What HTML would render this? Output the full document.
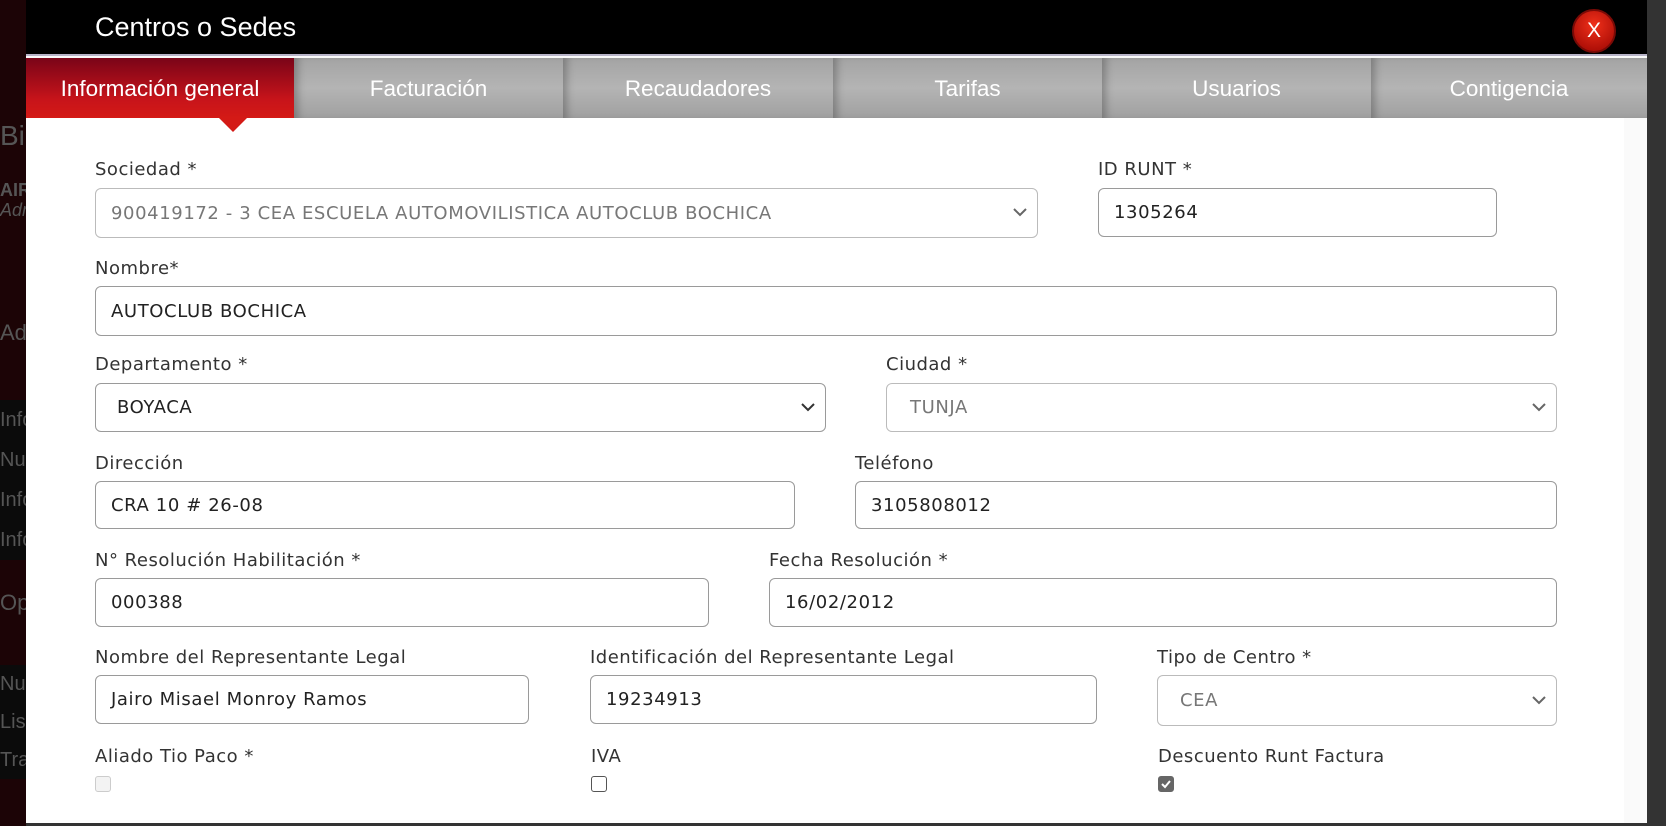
<!DOCTYPE html>
<html><head><meta charset="utf-8"><style>
*{box-sizing:border-box;margin:0;padding:0}
body{width:1666px;height:826px;overflow:hidden;background:#333;position:relative;font-family:"DejaVu Sans","Liberation Sans",sans-serif}
.left{position:absolute;left:0;top:0;width:26px;height:826px;background:#1c0406}
.left div{position:absolute;left:0;width:26px;font-family:"Liberation Sans",sans-serif;color:#555;font-size:20px;overflow:hidden;white-space:nowrap}
.modal{position:absolute;left:26px;top:0;width:1621px;height:823px;background:#fafafa}
.white{position:absolute;left:0;top:58px;width:1598px;height:765px;background:#fff}
.hdr{position:absolute;left:0;top:0;width:1621px;height:56px;background:#000;border-bottom:2px solid #b8b4c8}
.title{position:absolute;left:69px;top:12px;color:#fff;font-family:"Liberation Sans",sans-serif;font-size:27px}
.close{position:absolute;left:1546px;top:9px;width:44px;height:44px;border-radius:50%;background:radial-gradient(circle at 50% 35%,#f0301a,#b01008 75%);border:2px solid #7a0a06;color:#fff;font-family:"Liberation Sans",sans-serif;font-size:21px;text-align:center;line-height:40px}
.tabs{position:absolute;left:0;top:58px;height:60px;width:1621px}
.tab{position:absolute;top:0;height:60px;background:linear-gradient(#a4a4a4,#b4b4b4 50%,#a0a0a0);color:#fff;font-family:"Liberation Sans",sans-serif;font-size:22.5px;text-align:center;line-height:62px;box-shadow:inset 8px 0 8px -4px rgba(0,0,0,.25)}
.tab.act{background:linear-gradient(#7a0418,#c8141a 70%,#d41a16);box-shadow:none}
.arrow{position:absolute;left:193px;top:118px;width:0;height:0;border-left:14px solid transparent;border-right:14px solid transparent;border-top:14px solid #d41a16}
.lbl{position:absolute;font-size:18px;letter-spacing:0.5px;color:#333;white-space:nowrap}
.in{position:absolute;border:1px solid #9a9a9a;border-radius:6px;background:#fff;font-size:18px;letter-spacing:0.6px;color:#222;padding-left:15px;display:flex;align-items:center}
.in.dis{border-color:#bbb;color:#777}
.in svg{position:absolute;right:10px;top:50%;margin-top:-5px}
.cb{position:absolute;width:16px;height:16px;border:1.5px solid #555;border-radius:3px;background:#fff}
</style></head><body>
<div class="left">
<div style="top:120px;height:40px;font-size:28px">Bie</div>
<div style="top:180px;font-weight:bold;font-size:18px">AIR</div>
<div style="top:200px;font-style:italic;font-size:18px">Adm</div>
<div style="top:320px;font-size:22px">Ad</div>
<div style="top:400px;background:#0b0b0b;height:40px;line-height:40px">Info</div>
<div style="top:440px;background:#0b0b0b;height:40px;line-height:40px">Nu</div>
<div style="top:480px;background:#0b0b0b;height:40px;line-height:40px">Info</div>
<div style="top:520px;background:#0b0b0b;height:40px;line-height:40px">Info</div>
<div style="top:590px;font-size:22px">Op</div>
<div style="top:665px;background:#0b0b0b;height:38px;line-height:38px">Nu</div>
<div style="top:703px;background:#0b0b0b;height:38px;line-height:38px">Lis</div>
<div style="top:741px;background:#0b0b0b;height:38px;line-height:38px">Tra</div>
</div>
<div class="modal">
<div class="white"></div>
<div class="hdr"><div class="title">Centros o Sedes</div><div class="close">X</div></div>
<div class="tabs">
<div class="tab act" style="left:0;width:268px">Información general</div>
<div class="tab" style="left:268px;width:269px">Facturación</div>
<div class="tab" style="left:537px;width:270px">Recaudadores</div>
<div class="tab" style="left:807px;width:269px">Tarifas</div>
<div class="tab" style="left:1076px;width:269px">Usuarios</div>
<div class="tab" style="left:1345px;width:276px">Contigencia</div>
</div>
<div class="arrow"></div>
</div>

<div class="lbl" style="left:95px;top:159px">Sociedad *</div>
<div class="in dis" style="left:95px;top:188px;width:943px;height:50px">900419172 - 3 CEA ESCUELA AUTOMOVILISTICA AUTOCLUB BOCHICA<svg width="14" height="9"><path d="M1 1l6 6 6-6" fill="none" stroke="#666" stroke-width="2"/></svg></div>
<div class="lbl" style="left:1098px;top:159px">ID RUNT *</div>
<div class="in" style="left:1098px;top:188px;width:399px;height:49px">1305264</div>

<div class="lbl" style="left:95px;top:258px">Nombre*</div>
<div class="in" style="left:95px;top:286px;width:1462px;height:50px">AUTOCLUB BOCHICA</div>

<div class="lbl" style="left:95px;top:354px">Departamento *</div>
<div class="in" style="left:95px;top:383px;width:731px;height:49px;padding-left:21px">BOYACA<svg width="14" height="9"><path d="M1 1l6 6 6-6" fill="none" stroke="#333" stroke-width="2"/></svg></div>
<div class="lbl" style="left:886px;top:354px">Ciudad *</div>
<div class="in dis" style="left:886px;top:383px;width:671px;height:49px;padding-left:23px">TUNJA<svg width="14" height="9"><path d="M1 1l6 6 6-6" fill="none" stroke="#666" stroke-width="2"/></svg></div>

<div class="lbl" style="left:95px;top:453px">Dirección</div>
<div class="in" style="left:95px;top:481px;width:700px;height:48px">CRA 10 # 26-08</div>
<div class="lbl" style="left:855px;top:453px">Teléfono</div>
<div class="in" style="left:855px;top:481px;width:702px;height:48px">3105808012</div>

<div class="lbl" style="left:95px;top:550px">N° Resolución Habilitación *</div>
<div class="in" style="left:95px;top:578px;width:614px;height:49px">000388</div>
<div class="lbl" style="left:769px;top:550px">Fecha Resolución *</div>
<div class="in" style="left:769px;top:578px;width:788px;height:49px">16/02/2012</div>

<div class="lbl" style="left:95px;top:647px">Nombre del Representante Legal</div>
<div class="in" style="left:95px;top:675px;width:434px;height:49px">Jairo Misael Monroy Ramos</div>
<div class="lbl" style="left:590px;top:647px">Identificación del Representante Legal</div>
<div class="in" style="left:590px;top:675px;width:507px;height:49px">19234913</div>
<div class="lbl" style="left:1157px;top:647px">Tipo de Centro *</div>
<div class="in dis" style="left:1157px;top:675px;width:400px;height:51px;padding-left:22px">CEA<svg width="14" height="9"><path d="M1 1l6 6 6-6" fill="none" stroke="#666" stroke-width="2"/></svg></div>

<div class="lbl" style="left:95px;top:746px">Aliado Tio Paco *</div>
<div class="cb" style="left:95px;top:776px;border-color:#ccc;background:#f3f3f3"></div>
<div class="lbl" style="left:591px;top:746px">IVA</div>
<div class="cb" style="left:591px;top:776px"></div>
<div class="lbl" style="left:1158px;top:746px">Descuento Runt Factura</div>
<div class="cb" style="left:1158px;top:776px;background:#666;border-color:#666"><svg width="14" height="14" style="position:absolute;left:0;top:0"><path d="M3 7l3 3 5-6" fill="none" stroke="#fff" stroke-width="2"/></svg></div>
</body></html>
